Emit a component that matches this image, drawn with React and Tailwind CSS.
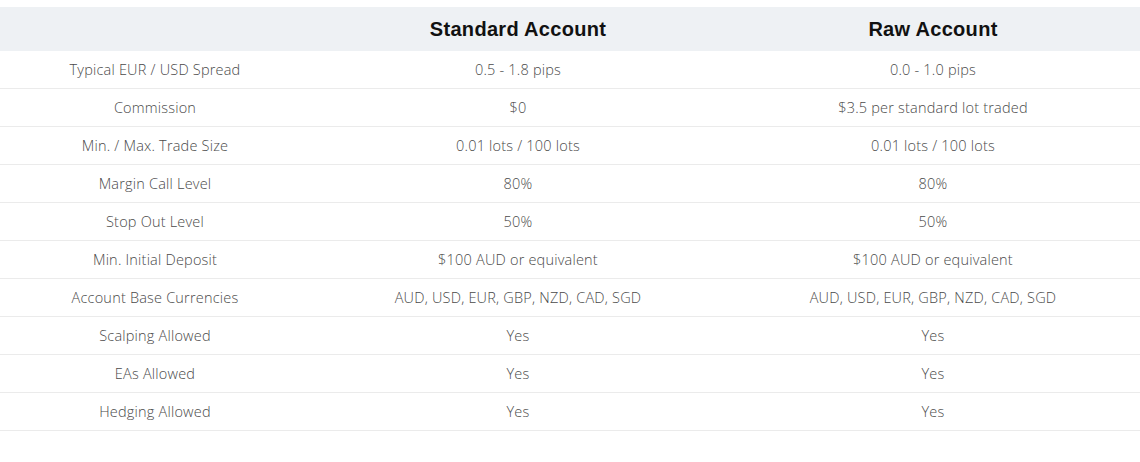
const rows = [
  ["Typical EUR / USD Spread", "0.5 - 1.8 pips", "0.0 - 1.0 pips"],
  ["Commission", "$0", "$3.5 per standard lot traded"],
  ["Min. / Max. Trade Size", "0.01 lots / 100 lots", "0.01 lots / 100 lots"],
  ["Margin Call Level", "80%", "80%"],
  ["Stop Out Level", "50%", "50%"],
  ["Min. Initial Deposit", "$100 AUD or equivalent", "$100 AUD or equivalent"],
  ["Account Base Currencies", "AUD, USD, EUR, GBP, NZD, CAD, SGD", "AUD, USD, EUR, GBP, NZD, CAD, SGD"],
  ["Scalping Allowed", "Yes", "Yes"],
  ["EAs Allowed", "Yes", "Yes"],
  ["Hedging Allowed", "Yes", "Yes"],
];

export default function App() {
  return (
    <div className="w-[1140px] h-[462px] bg-white pt-[7px]">
      <div className="grid grid-cols-[310px_416px_414px] h-[44px] bg-[#eef1f4] items-center text-center font-['Liberation_Sans',Arial,sans-serif] font-bold text-[20px] tracking-[0.3px] text-[#111]">
        <div></div>
        <div>Standard Account</div>
        <div>Raw Account</div>
      </div>
      {rows.map((r) => (
        <div
          key={r[0]}
          className="grid grid-cols-[310px_416px_414px] h-[38px] items-center text-center border-b border-[#ebebeb] font-['Open_Sans',sans-serif] font-light text-[14.5px] tracking-[0.2px] text-[#4a4a4a]"
        >
          <div>{r[0]}</div>
          <div>{r[1]}</div>
          <div>{r[2]}</div>
        </div>
      ))}
    </div>
  );
}
